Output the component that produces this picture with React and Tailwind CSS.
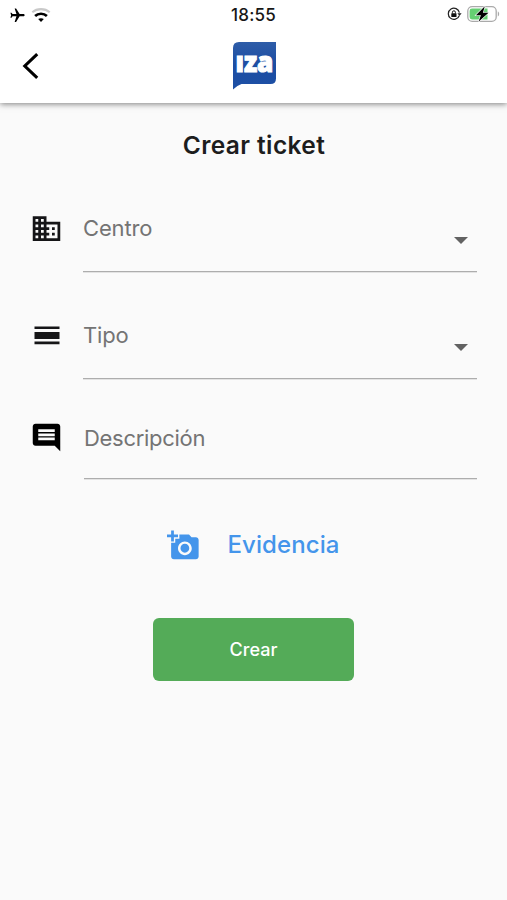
import React from 'react';
import { MdAddAPhoto, MdComment, MdDomain, MdFlight } from 'react-icons/md';

function WifiIcon() {
    return (
        <svg width="20" height="14" viewBox="0 0 20 14" fill="none">
            <path d="M1.3 4.3C6 .1 14 .1 18.7 4.3" stroke="#c9c9c9" strokeWidth="2.1" />
            <path d="M4.1 7.9C7.3 5 12.7 5 15.9 7.9" stroke="#000" strokeWidth="2.7" />
            <path d="M7.2 11.1C8.7 9.8 11.3 9.8 12.8 11.1L10 13.9Z" fill="#000" />
        </svg>
    );
}

function RotationLockIcon() {
    return (
        <svg width="15" height="14" viewBox="0 0 15 14" fill="none">
            <path d="M12.2 8.7A5.6 5.6 0 1 1 12.4 5.6" stroke="#222" strokeWidth="1.2" />
            <path d="M10.4 6.2h4.2l-2.1 2.9z" fill="#222" />
            <rect x="4.3" y="6.2" width="5.2" height="3.9" rx=".5" fill="#111" />
            <path d="M5.4 6.4V5.3a1.5 1.5 0 0 1 3 0v1.1" stroke="#111" strokeWidth="1" />
        </svg>
    );
}

function BatteryIcon() {
    return (
        <svg width="33" height="18" viewBox="0 0 33 18" fill="none">
            <rect x=".8" y="1.6" width="28.4" height="14.8" rx="4.4" stroke="#aaa" strokeWidth="1.3" />
            <path d="M30.8 6.6c1.8.6 1.8 4.2 0 4.8z" fill="#aaa" />
            <path d="M5 3.6h15.5v10.8H5a2.4 2.4 0 0 1-2.4-2.4V6A2.4 2.4 0 0 1 5 3.6z" fill="#65cf72" />
            <path
                d="M17.8 1.2 8.9 10.2h5l-2.4 6.6L21.5 7.8h-5.6z"
                fill="#000"
                stroke="#fff"
                strokeWidth="1.2"
                paintOrder="stroke"
            />
        </svg>
    );
}

function Logo() {
    return (
        <svg width="44" height="48" viewBox="0 0 44 48">
            <defs>
                <linearGradient id="logoBlue" x1="0" y1="0" x2="0" y2="1">
                    <stop offset="0" stopColor="#2e5da8" />
                    <stop offset=".5" stopColor="#1c4da3" />
                    <stop offset="1" stopColor="#1d50a5" />
                </linearGradient>
            </defs>
            <path
                d="M6 0H43V36.5Q43 42 37.5 42H8.5Q4 43.5 0 47.5V6Q0 0 6 0z"
                fill="url(#logoBlue)"
            />
            <text
                x="2.4"
                y="30.3"
                textLength="38"
                lengthAdjust="spacingAndGlyphs"
                fill="#fff"
                stroke="#fff"
                strokeWidth="1.1"
                fontFamily="Open Sans, sans-serif"
                fontWeight="800"
                fontSize="28"
            >
                ıza
            </text>
        </svg>
    );
}

function DayIcon() {
    return (
        <svg width="26" height="19" viewBox="0 0 26 19" fill="#151517">
            <path d="M.5 .5h25v2.6H.5zM.5 6h25v7H.5zM.5 15.6h25v2.6H.5z" />
        </svg>
    );
}

function SelectField({ icon, label }) {
    return (
        <div className="flex">
            <div className="flex justify-center items-center ml-[30px] w-[33px] h-[31px]">{icon}</div>
            <div className="flex justify-between ml-5 mr-[30px] shadow-[0_1px_0_#e3e3e3] border-[#adadad] border-b h-[59px] grow">
                <span className="-mt-px text-[#747474] text-[22px] leading-8 tracking-[-0.15px]">{label}</span>
                <svg className="mt-6 mr-[9px]" width="14" height="7" viewBox="0 0 14 7">
                    <path d="M0 0h14L7 7z" fill="#626262" />
                </svg>
            </div>
        </div>
    );
}

function App() {
    return (
        <div className="bg-[#fafafa] w-full h-[900px] overflow-hidden font-[Inter,sans-serif]">
            <header className="relative bg-white shadow-[0_1px_6px_rgba(0,0,0,0.5)] h-[103px]">
                <div className="grid grid-cols-3 px-[9px] h-[30px]">
                    <div className="flex items-center gap-[5px]">
                        <MdFlight className="rotate-90" size={17} />
                        <WifiIcon />
                    </div>
                    <span className="font-medium text-[#171717] text-[17px] text-center leading-[30px] tracking-[0.2px]">
                        18:55
                    </span>
                    <div className="flex justify-end items-center gap-[5px] -mt-[2px] -mr-[2px]">
                        <RotationLockIcon />
                        <BatteryIcon />
                    </div>
                </div>
                <div className="flex px-[22px] pt-3">
                    <button type="button" className="mt-[10px] w-[211px] h-7" aria-label="Volver">
                        <svg width="18" height="28" viewBox="0 0 18 28" fill="none">
                            <path d="M15.2 2.2 2.8 14l12.4 11.8" stroke="#000" strokeWidth="3.1" />
                        </svg>
                    </button>
                    <Logo />
                </div>
            </header>

            <main>
                <h1 className="mt-[26px] pl-px font-semibold text-[#1d1d1d] text-[24.5px] text-center leading-8 tracking-[0.4px]">
                    Crear ticket
                </h1>

                <div className="mt-[52px]">
                    <SelectField icon={<MdDomain size={33} color="#151517" />} label="Centro" />
                </div>
                <div className="mt-12">
                    <SelectField icon={<DayIcon />} label="Tipo" />
                </div>

                <div className="flex mt-[43px]">
                    <div className="-mt-px ml-[30px] w-[33px] h-8">
                        <MdComment size={33} />
                    </div>
                    <div className="ml-[21px] mr-[30px] shadow-[0_1px_0_#e3e3e3] border-[#adadad] border-b h-[57px] text-[#747474] text-[22px] leading-8 tracking-[-0.3px] grow">
                        Descripción
                    </div>
                </div>

                <button type="button" className="flex items-center gap-[27px] mx-auto mt-12 h-9 text-[#4495eb]">
                    <MdAddAPhoto size={33} />
                    <span className="font-medium text-[24px] tracking-[0.1px]">Evidencia</span>
                </button>

                <button
                    type="button"
                    className="block bg-[#54ab58] mx-auto mt-[55px] rounded-md w-[201px] h-[63px] font-medium text-[18px] text-white"
                >
                    Crear
                </button>
            </main>
        </div>
    );
}

export default App;
